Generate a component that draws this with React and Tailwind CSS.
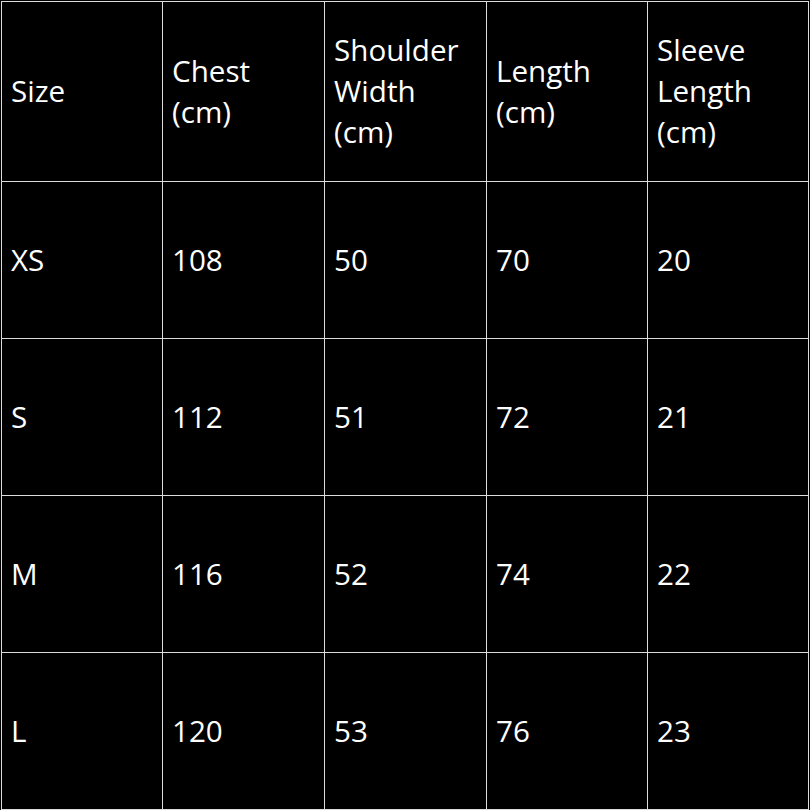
import React from "react";

const header = [
  ["Size"],
  ["Chest", "(cm)"],
  ["Shoulder", "Width", "(cm)"],
  ["Length", "(cm)"],
  ["Sleeve", "Length", "(cm)"],
];

const rows = [
  ["XS", "108", "50", "70", "20"],
  ["S", "112", "51", "72", "21"],
  ["M", "116", "52", "74", "22"],
  ["L", "120", "53", "76", "23"],
];

export default function App() {
  return (
    <div
      className="w-[810px] h-[810px] bg-black overflow-hidden"
      style={{ fontFamily: '"Open Sans", "Liberation Sans", sans-serif' }}
    >
      <div className="ml-px mt-px w-[808px] grid grid-cols-[160px_161px_161px_160px_160px] grid-rows-[179px_156px_156px_156px_156px] gap-px p-px bg-[#dcdcdc] text-white text-[29.6px] leading-[40.7px]">
        {header.map((lines, i) => (
          <div key={"h" + i} className="bg-black flex items-center pl-[9px]">
            <div>
              {lines.map((l, j) => (
                <div key={j}>{l}</div>
              ))}
            </div>
          </div>
        ))}
        {rows.map((r, ri) =>
          r.map((c, ci) => (
            <div key={ri + "-" + ci} className="bg-black flex items-center pl-[9px]">
              {c}
            </div>
          ))
        )}
      </div>
    </div>
  );
}
